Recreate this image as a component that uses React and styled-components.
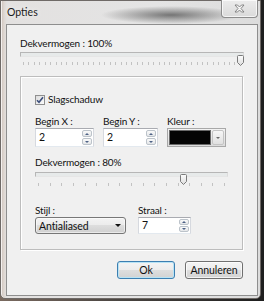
import React from "react";
import styled, { createGlobalStyle } from "styled-components";

const Global = createGlobalStyle`
  html, body { margin: 0; padding: 0; }
  body {
    background: #2a2725;
    font-family: "Lato", "Noto Sans", sans-serif;
  }
`;

const Screen = styled.div`
  width: 264px;
  height: 301px;
  overflow: hidden;
  background: linear-gradient(90deg, #7a6a60 0%, #4a4541 45%, #1e1e1e 100%);
`;

const Win = styled.div`
  width: 261px;
  height: 299px;
  box-sizing: border-box;
  border: 1px solid #6f6a67;
  border-radius: 0 0 5px 5px;
  padding: 0 2px 2px 5px;
  display: flex;
  flex-direction: column;
  background:
    linear-gradient(90deg, #cbbfb7 0px, #ded7d2 3px, #e3e1e0 6px, #e4e4e4 60%, #dcdcdc 100%);
  box-shadow: inset 1px 0 0 #f4f0ee;
`;

const TitleBar = styled.div`
  height: 23px;
  display: flex;
  justify-content: space-between;
  align-items: flex-start;
  background: radial-gradient(ellipse 70px 9px at 165px 14px, rgba(70, 70, 70, 0.7), rgba(90, 90, 90, 0) 100%);
`;

const Title = styled.span`
  padding-top: 5px;
  padding-left: 1px;
  font-size: 10.5px;
  line-height: 13px;
  color: #1b1b1b;
  text-shadow: 0 0 6px rgba(255, 255, 255, 0.9);
`;

const Close = styled.div`
  width: 37px;
  height: 18px;
  margin-top: -1px;
  box-sizing: border-box;
  border: 1px solid #8c8c8c;
  border-top: none;
  border-radius: 0 0 4px 4px;
  background: linear-gradient(#ececec, #dadada);
  box-shadow: inset 0 0 0 1px rgba(255, 255, 255, 0.7);
  display: flex;
  align-items: center;
  justify-content: center;
`;

const Client = styled.div`
  flex: 1;
  border: 1px solid #8e8e8e;
  background: #f0f0f0;
  padding: 12px 13px 0 13px;
  display: flex;
  flex-direction: column;
`;

const Label = styled.div`
  font-size: 10px;
  letter-spacing: -0.15px;
  line-height: 13px;
  color: #111;
  white-space: nowrap;
`;

const SliderBox = styled.div`
  position: relative;
  width: ${(p) => p.$width || "auto"};
  padding-top: ${(p) => p.$pad}px;
`;

const Track = styled.div`
  height: 5px;
  box-sizing: border-box;
  border: 1px solid #b6b6b6;
  border-bottom-color: #e6e6e6;
  border-right-color: #dcdcdc;
  background: #e7eaea;
`;

const Ticks = styled.div`
  margin-top: ${(p) => p.$gap}px;
  height: 3px;
  padding: 0 3px;
  display: flex;
  justify-content: space-between;
`;

const Tick = styled.span`
  width: 1px;
  height: 3px;
  background: #c2c2c2;
`;

const ThumbWrap = styled.div`
  position: absolute;
  top: 0;
  width: 7px;
  height: 11px;
`;

const Group = styled.div`
  margin-top: 11px;
  margin-right: 1px;
  border: 1px solid #bdbdbd;
  box-shadow: inset 1px 1px 0 #ffffff, 1px 1px 0 #ffffff;
  padding: 16px 14px 15px 14px;
  display: flex;
  flex-direction: column;
`;

const CheckRow = styled.label`
  display: flex;
  align-items: center;
  gap: 3px;
  font-size: 10px;
  letter-spacing: -0.15px;
  line-height: 13px;
  color: #111;
`;

const CheckBox = styled.span`
  width: 10px;
  height: 10px;
  box-sizing: border-box;
  border: 1px solid #8f8f8f;
  background: linear-gradient(135deg, #dcdcdc, #fbfbfb);
  display: flex;
  align-items: center;
  justify-content: center;
`;

const Row = styled.div`
  margin-top: ${(p) => p.$top}px;
  display: flex;
  gap: ${(p) => p.$gap}px;
`;

const Field = styled.div`
  width: ${(p) => p.$w}px;
  display: flex;
  flex-direction: column;
`;

const SpinBox = styled.div`
  height: ${(p) => p.$h}px;
  box-sizing: border-box;
  display: flex;
  border: 1px solid;
  border-color: #a9abb1 #d6d9df #e3e9ef #d6d9df;
  background: #ffffff;
`;

const SpinValue = styled.span`
  flex: 1;
  padding-left: 3px;
  font-size: 10.5px;
  line-height: ${(p) => p.$lh}px;
  color: #111;
`;

const SpinBtns = styled.div`
  width: 10px;
  margin: 1px;
  display: flex;
  flex-direction: column;
  gap: 1px;
`;

const SpinBtn = styled.span`
  flex: 1;
  border: 1px solid #bcc3ca;
  border-radius: 2px;
  background: linear-gradient(#fafafa, #e4e6e8);
  display: flex;
  align-items: center;
  justify-content: center;
`;

const Arrow = styled.span`
  width: 0;
  height: 0;
  border-left: ${(p) => p.$s}px solid transparent;
  border-right: ${(p) => p.$s}px solid transparent;
  ${(p) =>
    p.$up
      ? `border-bottom: ${p.$h}px solid ${p.$c};`
      : `border-top: ${p.$h}px solid ${p.$c};`}
`;

const ColorBox = styled.div`
  height: 19px;
  box-sizing: border-box;
  border: 1px solid #a8a8a8;
  background: linear-gradient(#f3f3f3, #dcdcdc);
  display: flex;
  padding: 1px;
  gap: 1px;
`;

const Swatch = styled.span`
  flex: 1;
  background: #050505;
  border: 1px solid #6a6a6a;
`;

const ColorBtn = styled.span`
  width: 10px;
  border: 1px solid #c4c4c4;
  border-radius: 2px;
  background: linear-gradient(#f7f7f7, #e0e0e0);
  display: flex;
  align-items: center;
  justify-content: center;
`;

const Select = styled.div`
  height: 17px;
  box-sizing: border-box;
  border: 1px solid #777777;
  border-radius: 3px;
  background: linear-gradient(#f3f3f3 0%, #ebebeb 50%, #dddddd 50%, #d0d0d0 100%);
  box-shadow: inset 0 0 0 1px rgba(255, 255, 255, 0.55);
  display: flex;
  align-items: center;
  justify-content: space-between;
  padding: 0 4px 0 3px;
  font-size: 10.5px;
  letter-spacing: -0.1px;
  color: #111;
`;

const ButtonRow = styled.div`
  margin-top: 11px;
  margin-right: 1px;
  display: flex;
  justify-content: flex-end;
  gap: 10px;
`;

const Button = styled.div`
  width: 58px;
  height: 18px;
  box-sizing: border-box;
  border: 1px solid ${(p) => (p.$primary ? "#3c7fb1" : "#707070")};
  border-radius: 3px;
  background: linear-gradient(#f4f4f4 0%, #ececec 50%, #dedede 50%, #d2d2d2 100%);
  box-shadow: inset 0 0 0 1px ${(p) => (p.$primary ? "#b8e3f5" : "rgba(255,255,255,0.7)")};
  display: flex;
  align-items: center;
  justify-content: center;
  font-size: 10.5px;
  letter-spacing: -0.1px;
  color: #111;
`;

function Thumb() {
  return (
    <svg width="7" height="11" viewBox="0 0 7 11">
      <defs>
        <linearGradient id="tg" x1="0" y1="0" x2="0" y2="1">
          <stop offset="0" stopColor="#fdfdfd" />
          <stop offset="1" stopColor="#dcdcdc" />
        </linearGradient>
      </defs>
      <path d="M0.5 1.5 Q0.5 0.5 1.5 0.5 H5.5 Q6.5 0.5 6.5 1.5 V7.5 L3.5 10.5 L0.5 7.5 Z" fill="url(#tg)" stroke="#7b7b7b" strokeWidth="1" />
    </svg>
  );
}

function Slider({ ticks, width, pad, gap, thumbLeft }) {
  return (
    <SliderBox $width={width} $pad={pad}>
      <Track />
      <ThumbWrap style={{ left: thumbLeft }}>
        <Thumb />
      </ThumbWrap>
      <Ticks $gap={gap}>
        {Array.from({ length: ticks + 1 }).map((_, i) => (
          <Tick key={i} />
        ))}
      </Ticks>
    </SliderBox>
  );
}

function Spin({ value, h = 19 }) {
  return (
    <SpinBox $h={h}>
      <SpinValue $lh={h - 2}>{value}</SpinValue>
      <SpinBtns>
        <SpinBtn>
          <Arrow $up $s={2} $h={2} $c="#4d6185" />
        </SpinBtn>
        <SpinBtn>
          <Arrow $s={2} $h={2} $c="#4d6185" />
        </SpinBtn>
      </SpinBtns>
    </SpinBox>
  );
}

export default function App() {
  return (
    <Screen>
      <Global />
      <Win>
        <TitleBar>
          <Title>Opties</Title>
          <Close>
            <svg width="11" height="9" viewBox="0 0 11 9">
              <path
                d="M1 1 H3.5 L5.5 3 L7.5 1 H10 L7 4.5 L10 8 H7.5 L5.5 6 L3.5 8 H1 L4 4.5 Z"
                fill="#f6f6f6"
                stroke="#7a7a7a"
                strokeWidth="0.9"
                strokeLinejoin="round"
              />
            </svg>
          </Close>
        </TitleBar>
        <Client>
          <Label>Dekvermogen : 100%</Label>
          <Slider ticks={40} pad={2} gap={5} thumbLeft={217} />
          <Group>
            <CheckRow>
              <CheckBox>
                <svg width="8" height="8" viewBox="0 0 8 8">
                  <path d="M1 4.2 L3 6.3 L7 1.2" fill="none" stroke="#3d4f7c" strokeWidth="1.6" />
                </svg>
              </CheckBox>
              Slagschaduw
            </CheckRow>
            <Row $top={9} $gap={9}>
              <Field $w={59}>
                <Label>Begin X :</Label>
                <Spin value="2" />
              </Field>
              <Field $w={55}>
                <Label>Begin Y :</Label>
                <Spin value="2" />
              </Field>
              <Field $w={59}>
                <Label>Kleur :</Label>
                <ColorBox>
                  <Swatch />
                  <ColorBtn>
                    <Arrow $s={2} $h={2} $c="#6b6b6b" />
                  </ColorBtn>
                </ColorBox>
              </Field>
            </Row>
            <Row $top={9} $gap={0}>
              <Field $w={193}>
                <Label>Dekvermogen : 80%</Label>
                <Slider ticks={16} pad={3} gap={6} thumbLeft={145} width="193px" />
              </Field>
            </Row>
            <Row $top={18} $gap={12}>
              <Field $w={91}>
                <Label>Stijl :</Label>
                <Select>
                  <span>Antialiased</span>
                  <Arrow $s={3} $h={3} $c="#111" />
                </Select>
              </Field>
              <Field $w={53}>
                <Label>Straal :</Label>
                <Spin value="7" h={17} />
              </Field>
            </Row>
          </Group>
          <ButtonRow>
            <Button $primary>Ok</Button>
            <Button>Annuleren</Button>
          </ButtonRow>
        </Client>
      </Win>
    </Screen>
  );
}
